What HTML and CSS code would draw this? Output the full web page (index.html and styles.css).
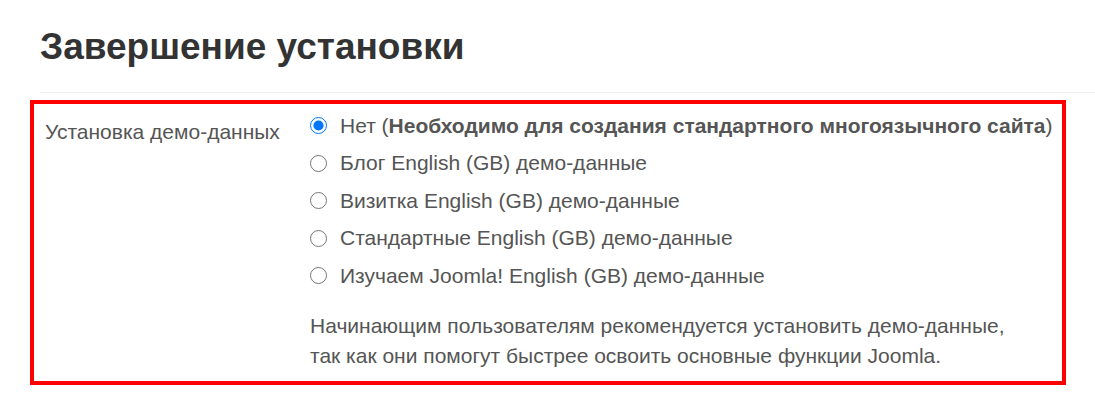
FILE: index.html
```html
<!DOCTYPE html>
<html lang="ru">
<head>
    <meta charset="UTF-8">
    <title>Завершение установки</title>
    <link rel="stylesheet" href="styles.css">
</head>
<body>
    <div class="page">
        <!-- Page heading -->
        <h1 class="title">Завершение установки</h1>

        <!-- Sample data choice -->
        <div class="control-group highlight">
            <div class="control-label">Установка демо-данных</div>
            <div class="controls">
                <label class="radio"><input type="radio" name="sample_file" checked> Нет (<b>Необходимо для создания стандартного многоязычного сайта</b>)</label>
                <label class="radio"><input type="radio" name="sample_file"> Блог English (GB) демо-данные</label>
                <label class="radio"><input type="radio" name="sample_file"> Визитка English (GB) демо-данные</label>
                <label class="radio"><input type="radio" name="sample_file"> Стандартные English (GB) демо-данные</label>
                <label class="radio"><input type="radio" name="sample_file"> Изучаем Joomla! English (GB) демо-данные</label>
                <p class="help">Начинающим пользователям рекомендуется установить демо-данные,<br>так как они помогут быстрее освоить основные функции Joomla.</p>
            </div>
        </div>
    </div>
</body>
</html>
```

FILE: styles.css
```css
/* Base */
* {
    margin: 0;
    padding: 0;
    box-sizing: border-box;
}

body {
    background: #fff;
    color: #555;
    font-family: "Liberation Sans", Arial, sans-serif;
    font-size: 21px;
}

.page {
    padding: 23px 0 0 40px;
}

/* Heading */
.title {
    font-size: 37px;
    font-weight: bold;
    color: #333;
    line-height: 48px;
    padding-bottom: 21px;
    border-bottom: 1px solid #eee;
}

/* Form row */
.control-group {
    display: grid;
    grid-template-columns: 265px 1fr;
    margin: 7px 0 0 -10px;
    width: 1036px;
    padding: 3px 0 10px 11px;
}

.highlight {
    border: 4px solid #ff0000;
}

.control-label {
    padding-top: 6px;
    line-height: 37.5px;
}

.controls .radio {
    display: flex;
    align-items: center;
    height: 37.5px;
    white-space: nowrap;
}

.radio input {
    width: 17px;
    height: 17px;
    margin: 0 13px 0 0;
}

.radio b {
    font-weight: bold;
}

.help {
    margin-top: 16px;
    line-height: 30px;
}
```
